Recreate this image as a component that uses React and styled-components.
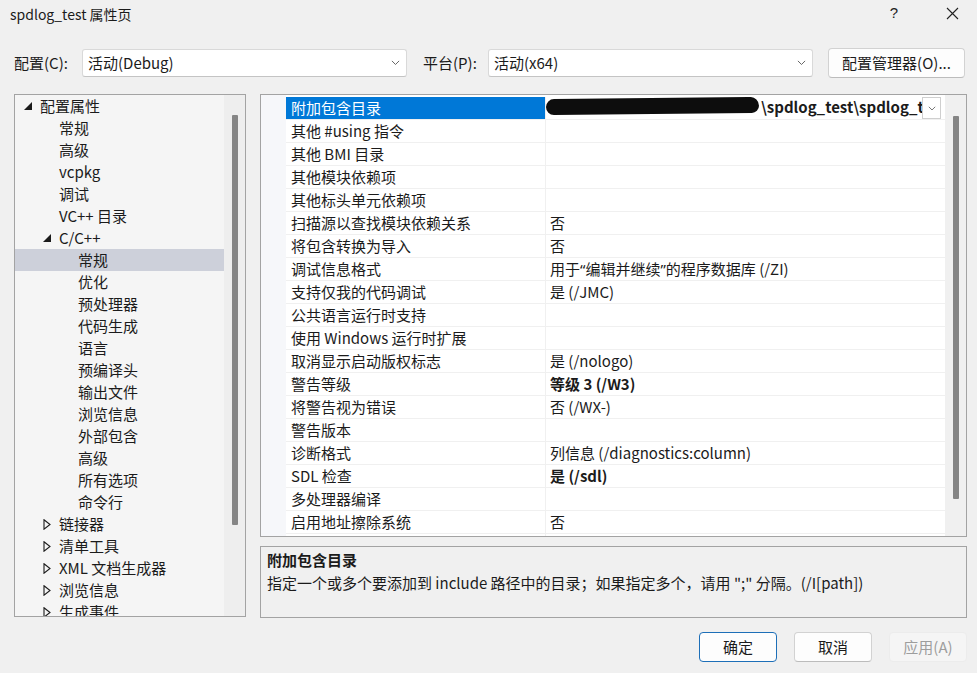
import React from "react";
import styled, { createGlobalStyle, css } from "styled-components";

const Global = createGlobalStyle`
  html, body { margin: 0; padding: 0; }
  body {
    background: #f0f0f0;
    font-family: "Noto Sans CJK SC", "Noto Sans", sans-serif;
    color: #1b1b1b;
    -webkit-font-smoothing: antialiased;
  }
`;

const Window = styled.div`
  width: 977px;
  height: 673px;
  display: flex;
  flex-direction: column;
  overflow: hidden;
  background: #f0f0f0;
`;

const TitleBar = styled.div`
  height: 30px;
  display: flex;
  align-items: center;
  padding-left: 10px;
  font-size: 14px;
  line-height: 20px;
`;

const TitleText = styled.div`
  flex: 1;
  margin-top: -2px;
`;

const TitleButton = styled.div`
  width: 46px;
  height: 30px;
  display: flex;
  align-items: center;
  justify-content: center;
  font-size: 15px;
  font-family: "Liberation Sans", sans-serif;
  color: #222;
  margin-top: -4px;
`;

const ConfigRow = styled.div`
  margin-top: 18px;
  height: 30px;
  display: flex;
  align-items: center;
  padding-left: 14px;
  font-size: 15px;
`;

const FieldLabel = styled.div`
  width: ${(p) => p.$w}px;
  padding-left: ${(p) => p.$pl || 0}px;
  box-sizing: border-box;
  line-height: 20px;
`;

const Combo = styled.div`
  width: 325px;
  height: 28px;
  box-sizing: border-box;
  background: #fff;
  border: 1px solid #d9d9d9;
  border-bottom-color: #c4c4c4;
  border-radius: 3px;
  display: flex;
  align-items: center;
  padding: 0 6px 0 5px;
  font-size: 15px;
  line-height: 20px;
`;

const ComboText = styled.div`
  flex: 1;
`;

const Button = styled.div`
  width: ${(p) => p.$w}px;
  height: ${(p) => p.$h || 30}px;
  box-sizing: border-box;
  background: ${(p) => (p.$disabled ? "#f5f5f5" : "#fdfdfd")};
  border: 1px solid ${(p) => (p.$primary ? "#1d6fb8" : p.$disabled ? "#ececec" : "#d2d2d2")};
  ${(p) =>
    !p.$primary &&
    !p.$disabled &&
    css`
      border-bottom-color: #bcbcbc;
    `}
  border-radius: 4px;
  display: flex;
  align-items: center;
  justify-content: center;
  font-size: 15px;
  line-height: 20px;
  color: ${(p) => (p.$disabled ? "#9d9d9d" : "#1b1b1b")};
`;

const Main = styled.div`
  margin-top: 16px;
  height: 524px;
  display: flex;
  padding-left: 14px;
  gap: 14px;
`;

const TreePanel = styled.div`
  width: 232px;
  height: 523px;
  box-sizing: border-box;
  border: 1px solid #a3a3a3;
  background: #f5f5f5;
  display: flex;
  overflow: hidden;
`;

const TreeList = styled.div`
  width: 209px;
  display: flex;
  flex-direction: column;
  overflow: hidden;
`;

const TreeRow = styled.div`
  height: 22px;
  flex: none;
  display: flex;
  align-items: center;
  padding-left: ${(p) => 9 + p.$level * 19}px;
  background: ${(p) => (p.$selected ? "#cdd0da" : "transparent")};
  font-size: 15px;
  line-height: 20px;
  white-space: nowrap;
`;

const Toggle = styled.div`
  width: 16px;
  flex: none;
  display: flex;
  align-items: center;
`;

const ScrollTrack = styled.div`
  width: 21px;
  flex: none;
  background: ${(p) => p.$bg || "#eeeeee"};
  display: flex;
  justify-content: center;
  padding-top: ${(p) => p.$top}px;
  box-sizing: border-box;
`;

const ScrollThumb = styled.div`
  width: 6px;
  height: ${(p) => p.$h}px;
  background: #858585;
  border-radius: 1px;
`;

const RightCol = styled.div`
  width: 707px;
  display: flex;
  flex-direction: column;
  gap: 9px;
`;

const Grid = styled.div`
  height: 443px;
  box-sizing: border-box;
  border: 1px solid #a3a3a3;
  background: #fff;
  display: flex;
  overflow: hidden;
`;

const Gutter = styled.div`
  width: 25px;
  flex: none;
  background: #f6f7fa;
`;

const Table = styled.div`
  width: 659px;
  height: 441px;
  padding-top: 2px;
  box-sizing: border-box;
  display: flex;
  flex-direction: column;
  overflow: hidden;
`;

const PropRow = styled.div`
  height: 23px;
  flex: none;
  box-sizing: border-box;
  display: grid;
  grid-template-columns: 260px 1fr;
  border-bottom: 1px solid #f0f0f0;
  font-size: 15px;
  line-height: 20px;
  white-space: nowrap;
`;

const NameCell = styled.div`
  padding-left: 5px;
  border-right: 1px solid #f0f0f0;
  display: flex;
  align-items: center;
  background: ${(p) => (p.$selected ? "#0078d7" : "transparent")};
  color: ${(p) => (p.$selected ? "#fff" : "#1b1b1b")};
  overflow: hidden;
`;

const ValueCell = styled.div`
  padding-left: 4px;
  display: flex;
  align-items: center;
  font-weight: ${(p) => (p.$bold ? 700 : 400)};
  overflow: hidden;
`;

const LatinQuote = styled.span`
  font-family: "Noto Sans", sans-serif;
`;

const EditValue = styled.div`
  display: flex;
  align-items: center;
  height: 100%;
  margin-left: -4px;
  width: 100%;
  overflow: hidden;
`;

const Redaction = styled.span`
  width: 213px;
  height: 16px;
  flex: none;
  background: #0d0d0d;
  border-radius: 9px 10px 8px 9px;
  margin-top: -5px;
  transform: skewY(-0.6deg);
`;

const PathText = styled.span`
  flex: 1;
  font-weight: 700;
  overflow: hidden;
  white-space: nowrap;
  margin-left: 2px;
  margin-top: -3px;
`;

const DropButton = styled.div`
  width: 19px;
  height: 22px;
  flex: none;
  box-sizing: border-box;
  border: 1px solid #cfcfcf;
  background: #fff;
  display: flex;
  align-items: center;
  justify-content: center;
  align-self: flex-start;
`;

const Desc = styled.div`
  height: 72px;
  box-sizing: border-box;
  border: 1px solid #a3a3a3;
  background: #f0f0f0;
  padding: 1px 6px 0;
  font-size: 15px;
  line-height: 23px;
`;

const DescTitle = styled.div`
  font-weight: 700;
`;

const Footer = styled.div`
  margin-top: 14px;
  display: flex;
  justify-content: flex-end;
  gap: 17px;
  padding-right: 10px;
`;

const Chevron = ({ size = 9 }) => (
  <svg width={size} height={size * 0.6} viewBox="0 0 10 6">
    <polyline points="1,1 5,5 9,1" fill="none" stroke="#555" strokeWidth="1" />
  </svg>
);

const Expanded = () => (
  <svg width="8" height="8" viewBox="0 0 8 8">
    <polygon points="8,0 8,8 0,8" fill="#1b1b1b" />
  </svg>
);

const Collapsed = () => (
  <svg width="8" height="11" viewBox="0 0 8 11">
    <polygon points="1,0.8 7,5.5 1,10.2" fill="none" stroke="#1b1b1b" strokeWidth="1.1" />
  </svg>
);

const CloseIcon = () => (
  <svg width="13" height="13" viewBox="0 0 13 13">
    <path d="M1 1 L12 12 M12 1 L1 12" stroke="#222" strokeWidth="1.1" />
  </svg>
);

const tree = [
  { t: "配置属性", l: 0, s: "open" },
  { t: "常规", l: 1 },
  { t: "高级", l: 1 },
  { t: "vcpkg", l: 1 },
  { t: "调试", l: 1 },
  { t: "VC++ 目录", l: 1 },
  { t: "C/C++", l: 1, s: "open" },
  { t: "常规", l: 2, sel: true },
  { t: "优化", l: 2 },
  { t: "预处理器", l: 2 },
  { t: "代码生成", l: 2 },
  { t: "语言", l: 2 },
  { t: "预编译头", l: 2 },
  { t: "输出文件", l: 2 },
  { t: "浏览信息", l: 2 },
  { t: "外部包含", l: 2 },
  { t: "高级", l: 2 },
  { t: "所有选项", l: 2 },
  { t: "命令行", l: 2 },
  { t: "链接器", l: 1, s: "closed" },
  { t: "清单工具", l: 1, s: "closed" },
  { t: "XML 文档生成器", l: 1, s: "closed" },
  { t: "浏览信息", l: 1, s: "closed" },
  { t: "生成事件", l: 1, s: "closed" },
];

const props = [
  ["其他 #using 指令", ""],
  ["其他 BMI 目录", ""],
  ["其他模块依赖项", ""],
  ["其他标头单元依赖项", ""],
  ["扫描源以查找模块依赖关系", "否"],
  ["将包含转换为导入", "否"],
  [
    "调试信息格式",
    <>
      用于<LatinQuote>“</LatinQuote>编辑并继续<LatinQuote>”</LatinQuote>的程序数据库 (/ZI)
    </>,
  ],
  ["支持仅我的代码调试", "是 (/JMC)"],
  ["公共语言运行时支持", ""],
  ["使用 Windows 运行时扩展", ""],
  ["取消显示启动版权标志", "是 (/nologo)"],
  ["警告等级", "等级 3 (/W3)", true],
  ["将警告视为错误", "否 (/WX-)"],
  ["警告版本", ""],
  ["诊断格式", "列信息 (/diagnostics:column)"],
  ["SDL 检查", "是 (/sdl)", true],
  ["多处理器编译", ""],
  ["启用地址擦除系统", "否"],
  ["启用模糊化程序支持(实验性)", "否"],
];

export default function App() {
  return (
    <>
      <Global />
      <Window>
        <TitleBar>
          <TitleText>spdlog_test 属性页</TitleText>
          <TitleButton>?</TitleButton>
          <TitleButton style={{ marginLeft: 12, marginRight: 2 }}>
            <CloseIcon />
          </TitleButton>
        </TitleBar>

        <ConfigRow>
          <FieldLabel $w={68}>配置(C):</FieldLabel>
          <Combo>
            <ComboText>活动(Debug)</ComboText>
            <Chevron />
          </Combo>
          <FieldLabel $w={81} $pl={16}>平台(P):</FieldLabel>
          <Combo>
            <ComboText>活动(x64)</ComboText>
            <Chevron />
          </Combo>
          <Button $w={137} $h={30} style={{ marginLeft: 15 }}>
            配置管理器(O)...
          </Button>
        </ConfigRow>

        <Main>
          <TreePanel>
            <TreeList>
              {tree.map((n, i) => (
                <TreeRow key={i} $level={n.l} $selected={n.sel}>
                  <Toggle>
                    {n.s === "open" && <Expanded />}
                    {n.s === "closed" && <Collapsed />}
                  </Toggle>
                  {n.t}
                </TreeRow>
              ))}
            </TreeList>
            <ScrollTrack $top={20}>
              <ScrollThumb $h={410} />
            </ScrollTrack>
          </TreePanel>

          <RightCol>
            <Grid>
              <Gutter />
              <Table>
                <PropRow>
                  <NameCell $selected>附加包含目录</NameCell>
                  <ValueCell>
                    <EditValue>
                      <Redaction />
                      <PathText>\spdlog_test\spdlog_test</PathText>
                      <DropButton>
                        <Chevron size={8} />
                      </DropButton>
                    </EditValue>
                  </ValueCell>
                </PropRow>
                {props.map(([n, v, b], i) => (
                  <PropRow key={i}>
                    <NameCell>{n}</NameCell>
                    <ValueCell $bold={b}>{v}</ValueCell>
                  </PropRow>
                ))}
              </Table>
              <ScrollTrack $top={21} $bg="#f0f0f0">
                <ScrollThumb $h={383} />
              </ScrollTrack>
            </Grid>
            <Desc>
              <DescTitle>附加包含目录</DescTitle>
              <div>指定一个或多个要添加到 include 路径中的目录；如果指定多个，请用 ";" 分隔。(/I[path])</div>
            </Desc>
          </RightCol>
        </Main>

        <Footer>
          <Button $w={78} $primary>确定</Button>
          <Button $w={78}>取消</Button>
          <Button $w={78} $disabled>应用(A)</Button>
        </Footer>
      </Window>
    </>
  );
}
